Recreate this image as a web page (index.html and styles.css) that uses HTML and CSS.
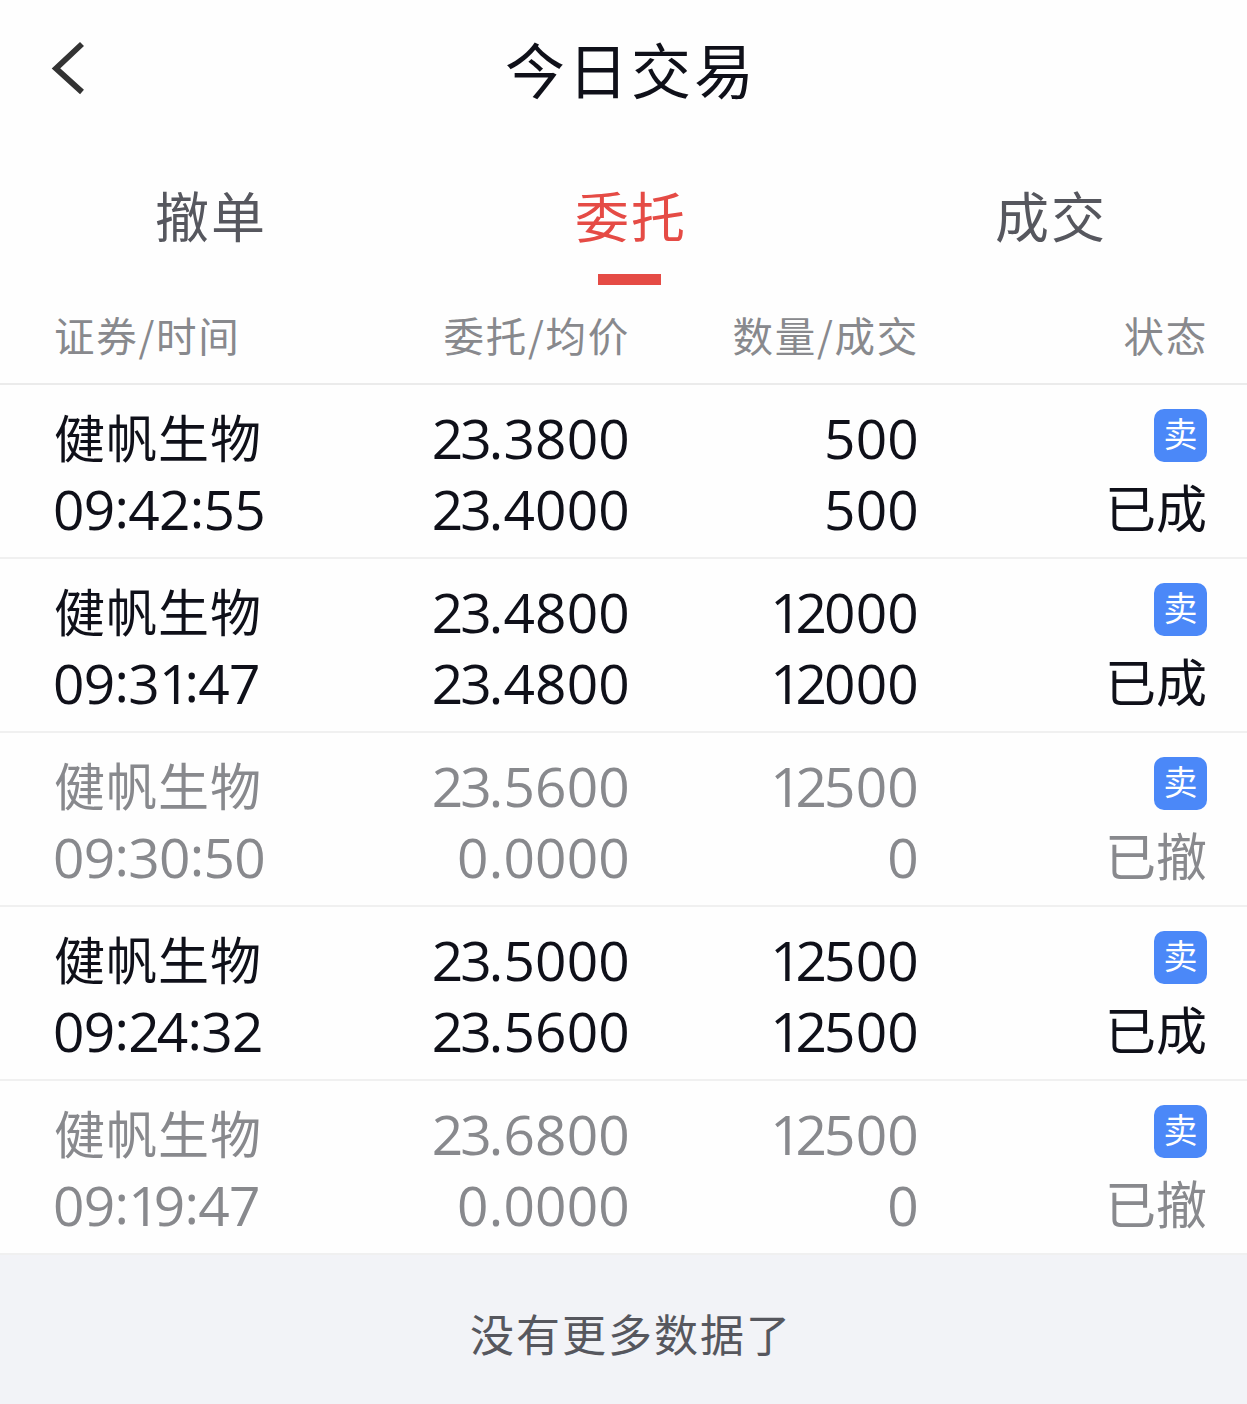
FILE: index.html
```html
<!DOCTYPE html>
<html lang="zh-CN">
<head>
<meta charset="utf-8">
<title>今日交易</title>
<link rel="stylesheet" href="styles.css">
</head>
<body>
<div class="app">
  <header class="topbar">
    <svg class="back" width="60" height="60" viewBox="0 0 60 60" fill="none" stroke="#333" stroke-width="5.8"><path d="M42 4 16 28.500 42 52"/></svg>
    <h1 class="title">今日交易</h1>
  </header>
  <nav class="tabs">
    <span class="tab">撤单</span>
    <span class="tab active">委托</span>
    <span class="tab">成交</span>
  </nav>
  <div class="grid head">
    <span>证券/时间</span><span class="num">委托/均价</span><span class="num">数量/成交</span><span class="num">状态</span>
  </div>
  <main>
    <section class="grid row">
      <div><p class="name">健帆生物</p><p class="time">09<i>:</i>42<i>:</i>55</p></div>
      <div class="num"><p><span class="lead">23</span>.3800</p><p><span class="lead">23</span>.4000</p></div>
      <div class="num"><p>500</p><p>500</p></div>
      <div class="status"><b class="badge">卖</b><p>已成</p></div>
    </section>
    <section class="grid row">
      <div><p class="name">健帆生物</p><p class="time">09<i>:</i>3<span class="one">1</span><i>:</i>47</p></div>
      <div class="num"><p><span class="lead">23</span>.4800</p><p><span class="lead">23</span>.4800</p></div>
      <div class="num"><p><span class="one">1</span><span class="lead">2</span>000</p><p><span class="one">1</span><span class="lead">2</span>000</p></div>
      <div class="status"><b class="badge">卖</b><p>已成</p></div>
    </section>
    <section class="grid row muted">
      <div><p class="name">健帆生物</p><p class="time">09<i>:</i>30<i>:</i>50</p></div>
      <div class="num"><p><span class="lead">23</span>.5600</p><p>0.0000</p></div>
      <div class="num"><p><span class="one">1</span><span class="lead">2</span>500</p><p>0</p></div>
      <div class="status"><b class="badge">卖</b><p>已撤</p></div>
    </section>
    <section class="grid row">
      <div><p class="name">健帆生物</p><p class="time">09<i>:</i><span class="lead">2</span>4<i>:</i>32</p></div>
      <div class="num"><p><span class="lead">23</span>.5000</p><p><span class="lead">23</span>.5600</p></div>
      <div class="num"><p><span class="one">1</span><span class="lead">2</span>500</p><p><span class="one">1</span><span class="lead">2</span>500</p></div>
      <div class="status"><b class="badge">卖</b><p>已成</p></div>
    </section>
    <section class="grid row muted">
      <div><p class="name">健帆生物</p><p class="time">09<i>:</i><span class="one">1</span>9<i>:</i>47</p></div>
      <div class="num"><p><span class="lead">23</span>.6800</p><p>0.0000</p></div>
      <div class="num"><p><span class="one">1</span><span class="lead">2</span>500</p><p>0</p></div>
      <div class="status"><b class="badge">卖</b><p>已撤</p></div>
    </section>
  </main>
  <footer class="end">没有更多数据了</footer>
</div>
</body>
</html>
```
FILE: styles.css
```css
* { box-sizing: border-box; margin: 0; padding: 0; }
body {
  background: #fefefe;
  color: #0f1019;
  font-family: "Noto Sans CJK SC", sans-serif;
  overflow: hidden;
}
.app { width: 1260px; height: 1404px; display: flex; flex-direction: column; }
.app > * { flex-shrink: 0; }
.topbar {
  height: 140px;
  display: grid;
  grid-template-columns: 160px 1fr 160px;
  align-items: center;
}
.back { margin-left: 40px; }
.title {
  padding: 0 0 5px 2px;
  font-size: 60px;
  font-weight: 400;
  letter-spacing: 3px;
  text-align: center;
  line-height: 80px;
}
.tabs { height: 146px; display: grid; grid-template-columns: repeat(3, 1fr); }
.tab {
  display: flex;
  flex-direction: column;
  align-items: center;
  justify-content: space-between;
  padding: 35px 0 0 2px;
  font-size: 54px;
  line-height: 80px;
  letter-spacing: 2px;
  color: #56575e;
}
.tab.active { color: #e54b45; }
.tab.active::after { content: ""; width: 63px; height: 11px; margin: 0 4px 1px 0; background: #e54b45; }
.grid {
  display: grid;
  grid-template-columns: 286px 290px 289px 1fr;
  padding: 0 53px;
}
.head {
  height: 99px;
  padding: 0 52px 0 54px;
  font-size: 40.500px;
  line-height: 98px;
  letter-spacing: 1.700px;
  color: #88898d;
  border-bottom: 2px solid #ebebeb;
}
.num { text-align: right; }
.row {
  height: 174px;
  padding-top: 17px;
  font-size: 55px;
  line-height: 71px;
  border-bottom: 2px solid #f0f0f0;
  font-family: "Open Sans", "Noto Sans CJK SC", sans-serif;
}
.row .num { letter-spacing: 0.200px; margin-right: -1px; }
.row .lead { letter-spacing: -3px; }
.row .one { letter-spacing: -6px; }
.muted { color: #88898d; }
.name {
  height: 71px;
  padding-left: 1px;
  line-height: 68px;
  font-family: "Noto Sans CJK SC", sans-serif;
  font-size: 51px;
  letter-spacing: 1px;
}
.time { letter-spacing: -0.700px; }
.time i { font-style: normal; line-height: 1; vertical-align: 2px; }
.status {
  display: flex;
  flex-direction: column;
  align-items: flex-end;
  padding-top: 7px;
  gap: 9px;
  font-family: "Noto Sans CJK SC", sans-serif;
  font-size: 51px;
}
.badge {
  width: 53px;
  height: 53px;
  border-radius: 10px;
  background: #4b88f8;
  color: #fff;
  font-size: 34px;
  font-weight: 400;
  line-height: 47px;
  text-align: center;
}
.end {
  height: 151px;
  overflow: hidden;
  background: #f2f3f7;
  color: #56575e;
  font-size: 44px;
  line-height: 157px;
  letter-spacing: 2px;
  padding-left: 2px;
  text-align: center;
}
```
